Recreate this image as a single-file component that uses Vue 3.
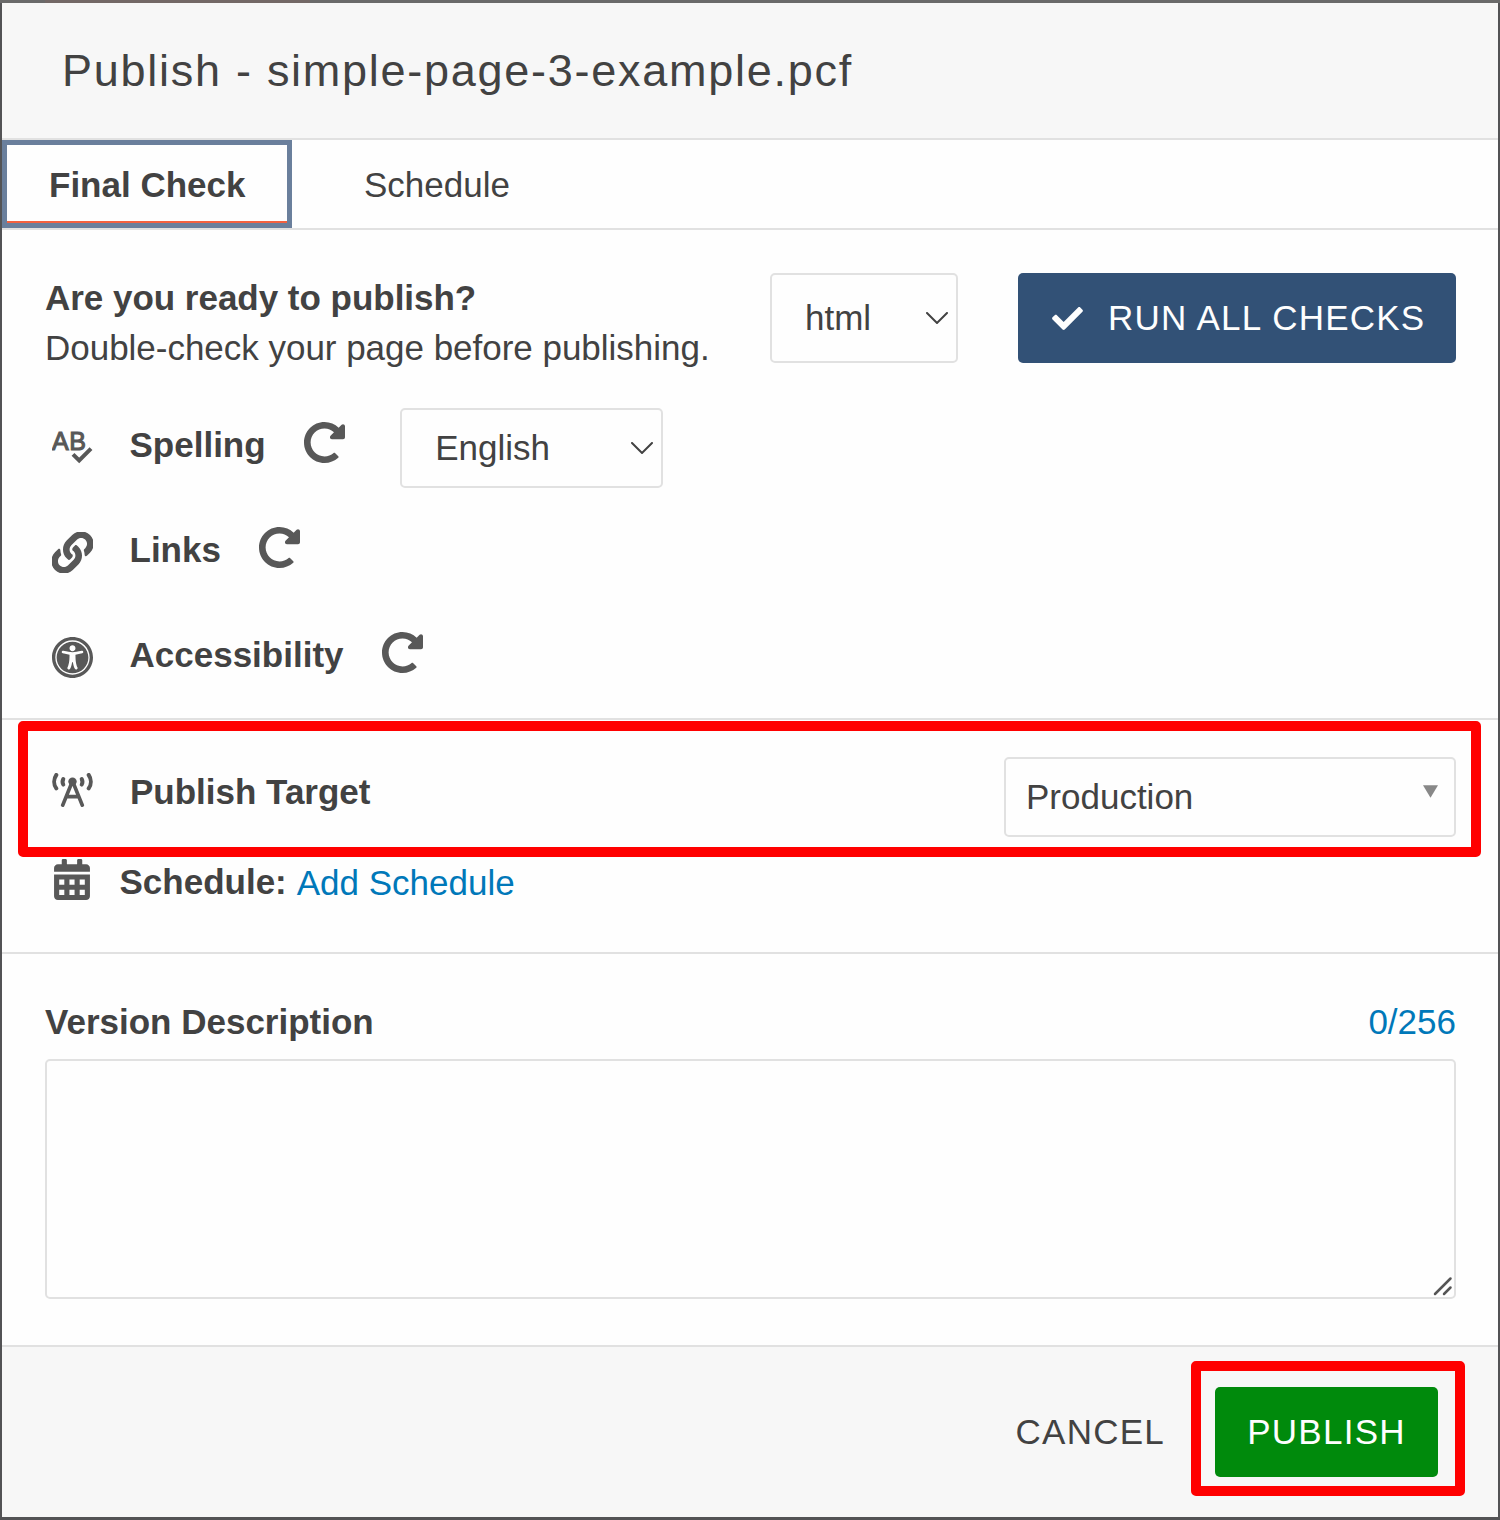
<script setup>
import { ref } from 'vue'

const reload =
  'M256.455 8c66.269.119 126.437 26.233 170.859 68.685l35.715-35.715C478.149 25.851 504 36.559 504 57.941V192c0 13.255-10.745 24-24 24H345.941c-21.382 0-32.09-25.851-16.971-40.971l41.75-41.75c-30.864-28.899-70.801-44.907-113.23-45.273-92.398-.798-170.283 73.977-169.484 169.442C88.764 348.009 162.184 424 256 424c41.127 0 79.997-14.678 110.629-41.556 4.743-4.161 11.906-3.908 16.368.553l39.662 39.662c4.872 4.872 4.631 12.815-.482 17.433C378.202 479.813 319.926 504 256 504 119.034 504 8.001 392.967 8 256.002 7.999 119.193 119.646 7.755 256.455 8z'
const link =
  'M326.612 185.391c59.747 59.809 58.927 155.698.36 214.59-.11.12-.24.25-.36.37l-67.2 67.2c-59.27 59.27-155.699 59.262-214.96 0-59.27-59.26-59.27-155.7 0-214.96l37.106-37.106c9.84-9.84 26.786-3.3 27.294 10.606.648 17.722 3.826 35.527 9.69 52.721 1.986 5.822.567 12.262-3.783 16.612l-13.087 13.087c-28.026 28.026-28.905 73.66-1.155 101.96 28.024 28.579 74.086 28.749 102.325.51l67.2-67.19c28.191-28.191 28.073-73.757 0-101.83-3.701-3.694-7.429-6.564-10.341-8.569a16.037 16.037 0 0 1-6.947-12.606c-.396-10.567 3.348-21.456 11.698-29.806l21.054-21.055c5.521-5.521 14.182-6.199 20.584-1.731a152.482 152.482 0 0 1 20.522 17.197zM467.547 44.449c-59.261-59.262-155.69-59.27-214.96 0l-67.2 67.2c-.12.12-.25.25-.36.37-58.566 58.892-59.387 154.781.36 214.59a152.454 152.454 0 0 0 20.521 17.196c6.402 4.468 15.064 3.789 20.584-1.731l21.054-21.055c8.35-8.35 12.094-19.239 11.698-29.806a16.037 16.037 0 0 0-6.947-12.606c-2.912-2.005-6.64-4.875-10.341-8.569-28.073-28.073-28.191-73.639 0-101.83l67.2-67.19c28.239-28.239 74.3-28.069 102.325.51 27.75 28.3 26.872 73.934-1.155 101.96l-13.087 13.087c-4.35 4.35-5.769 10.79-3.783 16.612 5.864 17.194 9.042 34.999 9.69 52.721.509 13.906 17.454 20.446 27.294 10.606l37.106-37.106c59.271-59.259 59.271-155.699.001-214.959z'
const access =
  'M256 48c114.953 0 208 93.029 208 208 0 114.953-93.029 208-208 208-114.953 0-208-93.029-208-208 0-114.953 93.029-208 208-208m0-40C119.033 8 8 119.033 8 256s111.033 248 248 248 248-111.033 248-248S392.967 8 256 8zm0 56C149.961 64 64 149.961 64 256s85.961 192 192 192 192-85.961 192-192S362.039 64 256 64zm0 44c19.882 0 36 16.118 36 36s-16.118 36-36 36-36-16.118-36-36 16.118-36 36-36zm117.741 98.023c-28.712 6.779-55.511 12.748-82.14 15.807.851 101.023 12.306 123.052 25.037 155.621 3.617 9.26-.957 19.698-10.217 23.315-9.261 3.617-19.699-.957-23.316-10.217-8.705-22.308-17.086-40.636-22.261-78.549h-9.686c-5.167 37.851-13.534 56.208-22.262 78.549-3.615 9.255-14.05 13.836-23.315 10.217-9.26-3.617-13.834-14.056-10.217-23.315 12.713-32.541 24.185-54.541 25.037-155.621-26.629-3.058-53.428-9.027-82.141-15.807-8.6-2.031-13.926-10.648-11.895-19.249s10.647-13.926 19.249-11.895c96.686 22.829 124.283 22.783 220.775 0 8.599-2.03 17.218 3.294 19.249 11.895 2.029 8.601-3.297 17.219-11.897 19.249z'
const tick =
  'M173.898 439.404l-166.4-166.4c-9.997-9.997-9.997-26.206 0-36.204l36.203-36.204c9.997-9.998 26.207-9.998 36.204 0L192 312.69 432.095 72.596c9.997-9.997 26.207-9.997 36.204 0l36.203 36.204c9.997 9.997 9.997 26.206 0 36.204l-294.4 294.401c-9.998 9.997-26.207 9.997-36.204-.001z'

const checks = [
  { id: 'spelling', label: 'Spelling' },
  { id: 'links', label: 'Links', icon: link },
  { id: 'access', label: 'Accessibility', icon: access },
]
const limit = 256
const description = ref('')
</script>

<template>
  <div class="backdrop">
    <div class="dialog">
      <header class="head">Publish - simple-page-3-example.pcf</header>

      <nav class="tabs">
        <div class="tab active">Final Check</div>
        <div class="tab">Schedule</div>
      </nav>

      <section class="final">
        <div class="intro">
          <div class="copy">
            <b>Are you ready to publish?</b>
            <span>Double-check your page before publishing.</span>
          </div>
          <div class="select type">
            <span>html</span>
            <svg class="chev" viewBox="0 0 22 12"><path d="M1 1l10 10L21 1" /></svg>
          </div>
          <div class="run">
            <svg viewBox="0 65 512 382"><path :d="tick" /></svg>
            <span>RUN ALL CHECKS</span>
          </div>
        </div>

        <div v-for="c in checks" :key="c.id" class="check">
          <svg v-if="c.icon" class="icon" viewBox="8 8 496 496"><path :d="c.icon" /></svg>
          <svg v-else class="icon abc" viewBox="0 0 41 41">
            <text x="0" y="25.2">A</text>
            <text x="17.2" y="25.2">B</text>
            <path class="halo" d="M21 29.3l6.200 6.200L39 23.700" />
            <path class="mark" d="M21 29.3l6.200 6.200L39 23.700" />
          </svg>
          <b>{{ c.label }}</b>
          <svg class="reload" viewBox="8 8 496 496"><path :d="reload" /></svg>
          <div v-if="c.id === 'spelling'" class="select lang">
            <span>English</span>
            <svg class="chev" viewBox="0 0 22 12"><path d="M1 1l10 10L21 1" /></svg>
          </div>
        </div>
      </section>

      <section class="delivery">
        <div class="target">
          <svg class="tower" viewBox="0 0 42 34">
            <circle cx="20.5" cy="8.6" r="4.2" />
            <path class="mast" d="M20.500 8L10.700 32.200M20.500 8l9.800 24.200M14.500 23.600h12" />
            <path d="M4.300 2C1.500 6 1.500 11.500 4.300 15.400M36.700 2c2.800 4 2.800 9.500 0 13.400" />
            <path d="M11.300 6c-1 1.900-1 3.800 0 5.600M29.700 6c1 1.900 1 3.800 0 5.600" />
          </svg>
          <b>Publish Target</b>
          <div class="select prod">
            <span>Production</span>
            <svg class="tri" viewBox="0 0 15 12.6"><path d="M0 0h15L7.5 12.6z" /></svg>
          </div>
          <div class="ring"></div>
        </div>
        <div class="schedule">
          <svg viewBox="0 0 448 512">
            <path
              fill-rule="evenodd"
              d="M0 464C0 490.5 21.5 512 48 512H400C426.5 512 448 490.5 448 464V192H0ZM64 256h64v64H64ZM192 256h64v64H192ZM320 256h64v64H320ZM64 384h64v64H64ZM192 384h64v64H192ZM320 384h64v64H320Z"
            />
            <path
              d="M400 64H352V16C352 7.200 344.800 0 336 0H304C295.200 0 288 7.200 288 16V64H160V16C160 7.200 152.800 0 144 0H112C103.200 0 96 7.200 96 16V64H48C21.500 64 0 85.500 0 112V160H448V112C448 85.500 426.500 64 400 64Z"
            />
          </svg>
          <b>Schedule:</b>
          <a>Add Schedule</a>
        </div>
      </section>

      <section class="version">
        <div class="caption">
          <b>Version Description</b>
          <span>{{ description.length }}/{{ limit }}</span>
        </div>
        <div class="area">
          <svg viewBox="0 0 20 20"><path d="M2 18L17.500 2.500M11 18l6.500-6.500" /></svg>
        </div>
      </section>

      <footer class="foot">
        <div class="cancel">CANCEL</div>
        <div class="publish">
          PUBLISH
          <div class="ring"></div>
        </div>
      </footer>
    </div>
  </div>
</template>

<style>
body {
  margin: 0;
}
</style>

<style scoped>
* {
  box-sizing: border-box;
}
svg {
  display: block;
  flex: none;
  fill: #585858;
}
.backdrop {
  width: 1500px;
  height: 1520px;
  padding: 3px 2px 3px 2px;
  background: linear-gradient(90deg, transparent 45px, #736866 45px, #736866 310px, transparent 310px) 0 0 / 100% 3px
      no-repeat,
    linear-gradient(#6a6a6a, #6a6a6a) 0 0 / 100% 3px no-repeat, #535355;
  overflow: hidden;
}
.dialog {
  display: flex;
  flex-direction: column;
  height: 1514px;
  background: #fefefe;
  color: #424242;
  font: 35px/40px 'Liberation Sans', Arial, sans-serif;
  white-space: nowrap;
}
.head {
  height: 137px;
  padding-left: 60px;
  border-bottom: 2px solid #e1e1e1;
  background: #f7f7f7;
  font-size: 45px;
  line-height: 136px;
  letter-spacing: 1.73px;
}
.tabs {
  display: flex;
  height: 90px;
  border-bottom: 2px solid #e1e1e1;
}
.tab {
  height: 88px;
  padding: 0 72px;
  line-height: 90px;
}
.tab.active {
  width: 290px;
  padding: 0 0 0 42px;
  border: 5px solid #6a7f9c;
  line-height: 80px;
  font-weight: bold;
  box-shadow: inset 0 -2px #f4613f;
}
.final {
  height: 490px;
  padding: 43px 42px 0 43px;
  border-bottom: 2px solid #e1e1e1;
}
.intro {
  display: flex;
  height: 90px;
}
.copy {
  display: flex;
  flex-direction: column;
  width: 725px;
  line-height: 50px;
  letter-spacing: -0.02px;
}
.select {
  display: flex;
  align-items: center;
  justify-content: space-between;
  border: 2px solid #e1e1e1;
  border-radius: 5px;
}
.chev {
  width: 22px;
  height: 12px;
  fill: none;
  stroke: #424242;
  stroke-width: 2;
  stroke-linecap: round;
}
.type {
  width: 188px;
  padding: 0 8px 0 33px;
}
.run {
  display: flex;
  align-items: center;
  width: 438px;
  margin-left: 60px;
  padding-left: 34px;
  border-radius: 5px;
  background: #325176;
  color: #fefefe;
  letter-spacing: 1.23px;
}
.run svg {
  width: 31px;
  height: 23px;
  margin-right: 25px;
  fill: #fefefe;
}
.check {
  display: flex;
  height: 105px;
  padding: 62px 0 0 7px;
}
.check .icon {
  width: 41px;
  height: 41px;
  margin: 2px 36.5px 0 0;
}
.check .abc {
  margin-top: 0;
}
.abc text {
  font-size: 25px;
  fill: #585858;
  stroke: #585858;
  stroke-width: 1.1;
}
.abc path {
  fill: none;
  stroke: #585858;
  stroke-width: 4;
}
.abc .halo {
  stroke: #fefefe;
  stroke-width: 7;
}
.reload {
  width: 41px;
  height: 41px;
  margin: -3px 0 0 38.5px;
}
.lang {
  width: 263px;
  height: 80px;
  margin: -17px 0 0 55px;
  padding: 0 8px 0 33px;
}
.delivery {
  height: 234px;
  padding: 37px 42px 0 43px;
  border-bottom: 2px solid #e1e1e1;
}
.target {
  position: relative;
  display: flex;
  height: 80px;
  padding-left: 7px;
}
.tower {
  width: 42px;
  height: 34px;
  margin: 16px 36.500px 0 -0.500px;
}
.tower path {
  fill: none;
  stroke: #585858;
  stroke-width: 4;
  stroke-linecap: round;
}
.tower .mast {
  stroke-width: 3.6;
}
.target b {
  margin-top: 15px;
}
.prod {
  width: 452px;
  margin-left: auto;
  padding: 0 16px 0 20px;
}
.tri {
  width: 15px;
  height: 13px;
  margin-bottom: 11px;
  fill: #888;
}
.ring {
  position: absolute;
  border: 10px solid #f00;
  border-radius: 5px;
  pointer-events: none;
}
.target .ring {
  inset: -36px -25px -20px -27px;
}
.schedule {
  display: flex;
  margin-top: 22px;
  padding-left: 9px;
}
.schedule svg {
  width: 36px;
  height: 41px;
  margin-right: 29.5px;
}
.schedule b {
  margin-top: 3px;
}
.schedule a {
  margin: 4px 0 0 10px;
  color: #0078b9;
}
.version {
  height: 393px;
  padding: 48px 42px 0 43px;
  border-bottom: 2px solid #e1e1e1;
}
.caption {
  display: flex;
  justify-content: space-between;
}
.caption span {
  color: #0078b9;
}
.area {
  display: flex;
  align-items: flex-end;
  justify-content: flex-end;
  height: 240px;
  margin-top: 17px;
  border: 2px solid #e1e1e1;
  border-radius: 5px;
}
.area svg {
  width: 20px;
  height: 20px;
  margin: 0 1px 1px 0;
  fill: none;
  stroke: #555;
  stroke-width: 2.5;
  stroke-linecap: round;
}
.foot {
  display: flex;
  flex: 1;
  justify-content: flex-end;
  padding: 40px 60px 0 0;
  background: #f7f7f7;
  line-height: 90px;
  letter-spacing: 1.25px;
}
.publish {
  position: relative;
  width: 223px;
  height: 90px;
  margin-left: 50px;
  border-radius: 5px;
  background: #008a0c;
  color: #fefefe;
  text-align: center;
}
.publish .ring {
  inset: -26px -27px -19px -24px;
}
</style>
